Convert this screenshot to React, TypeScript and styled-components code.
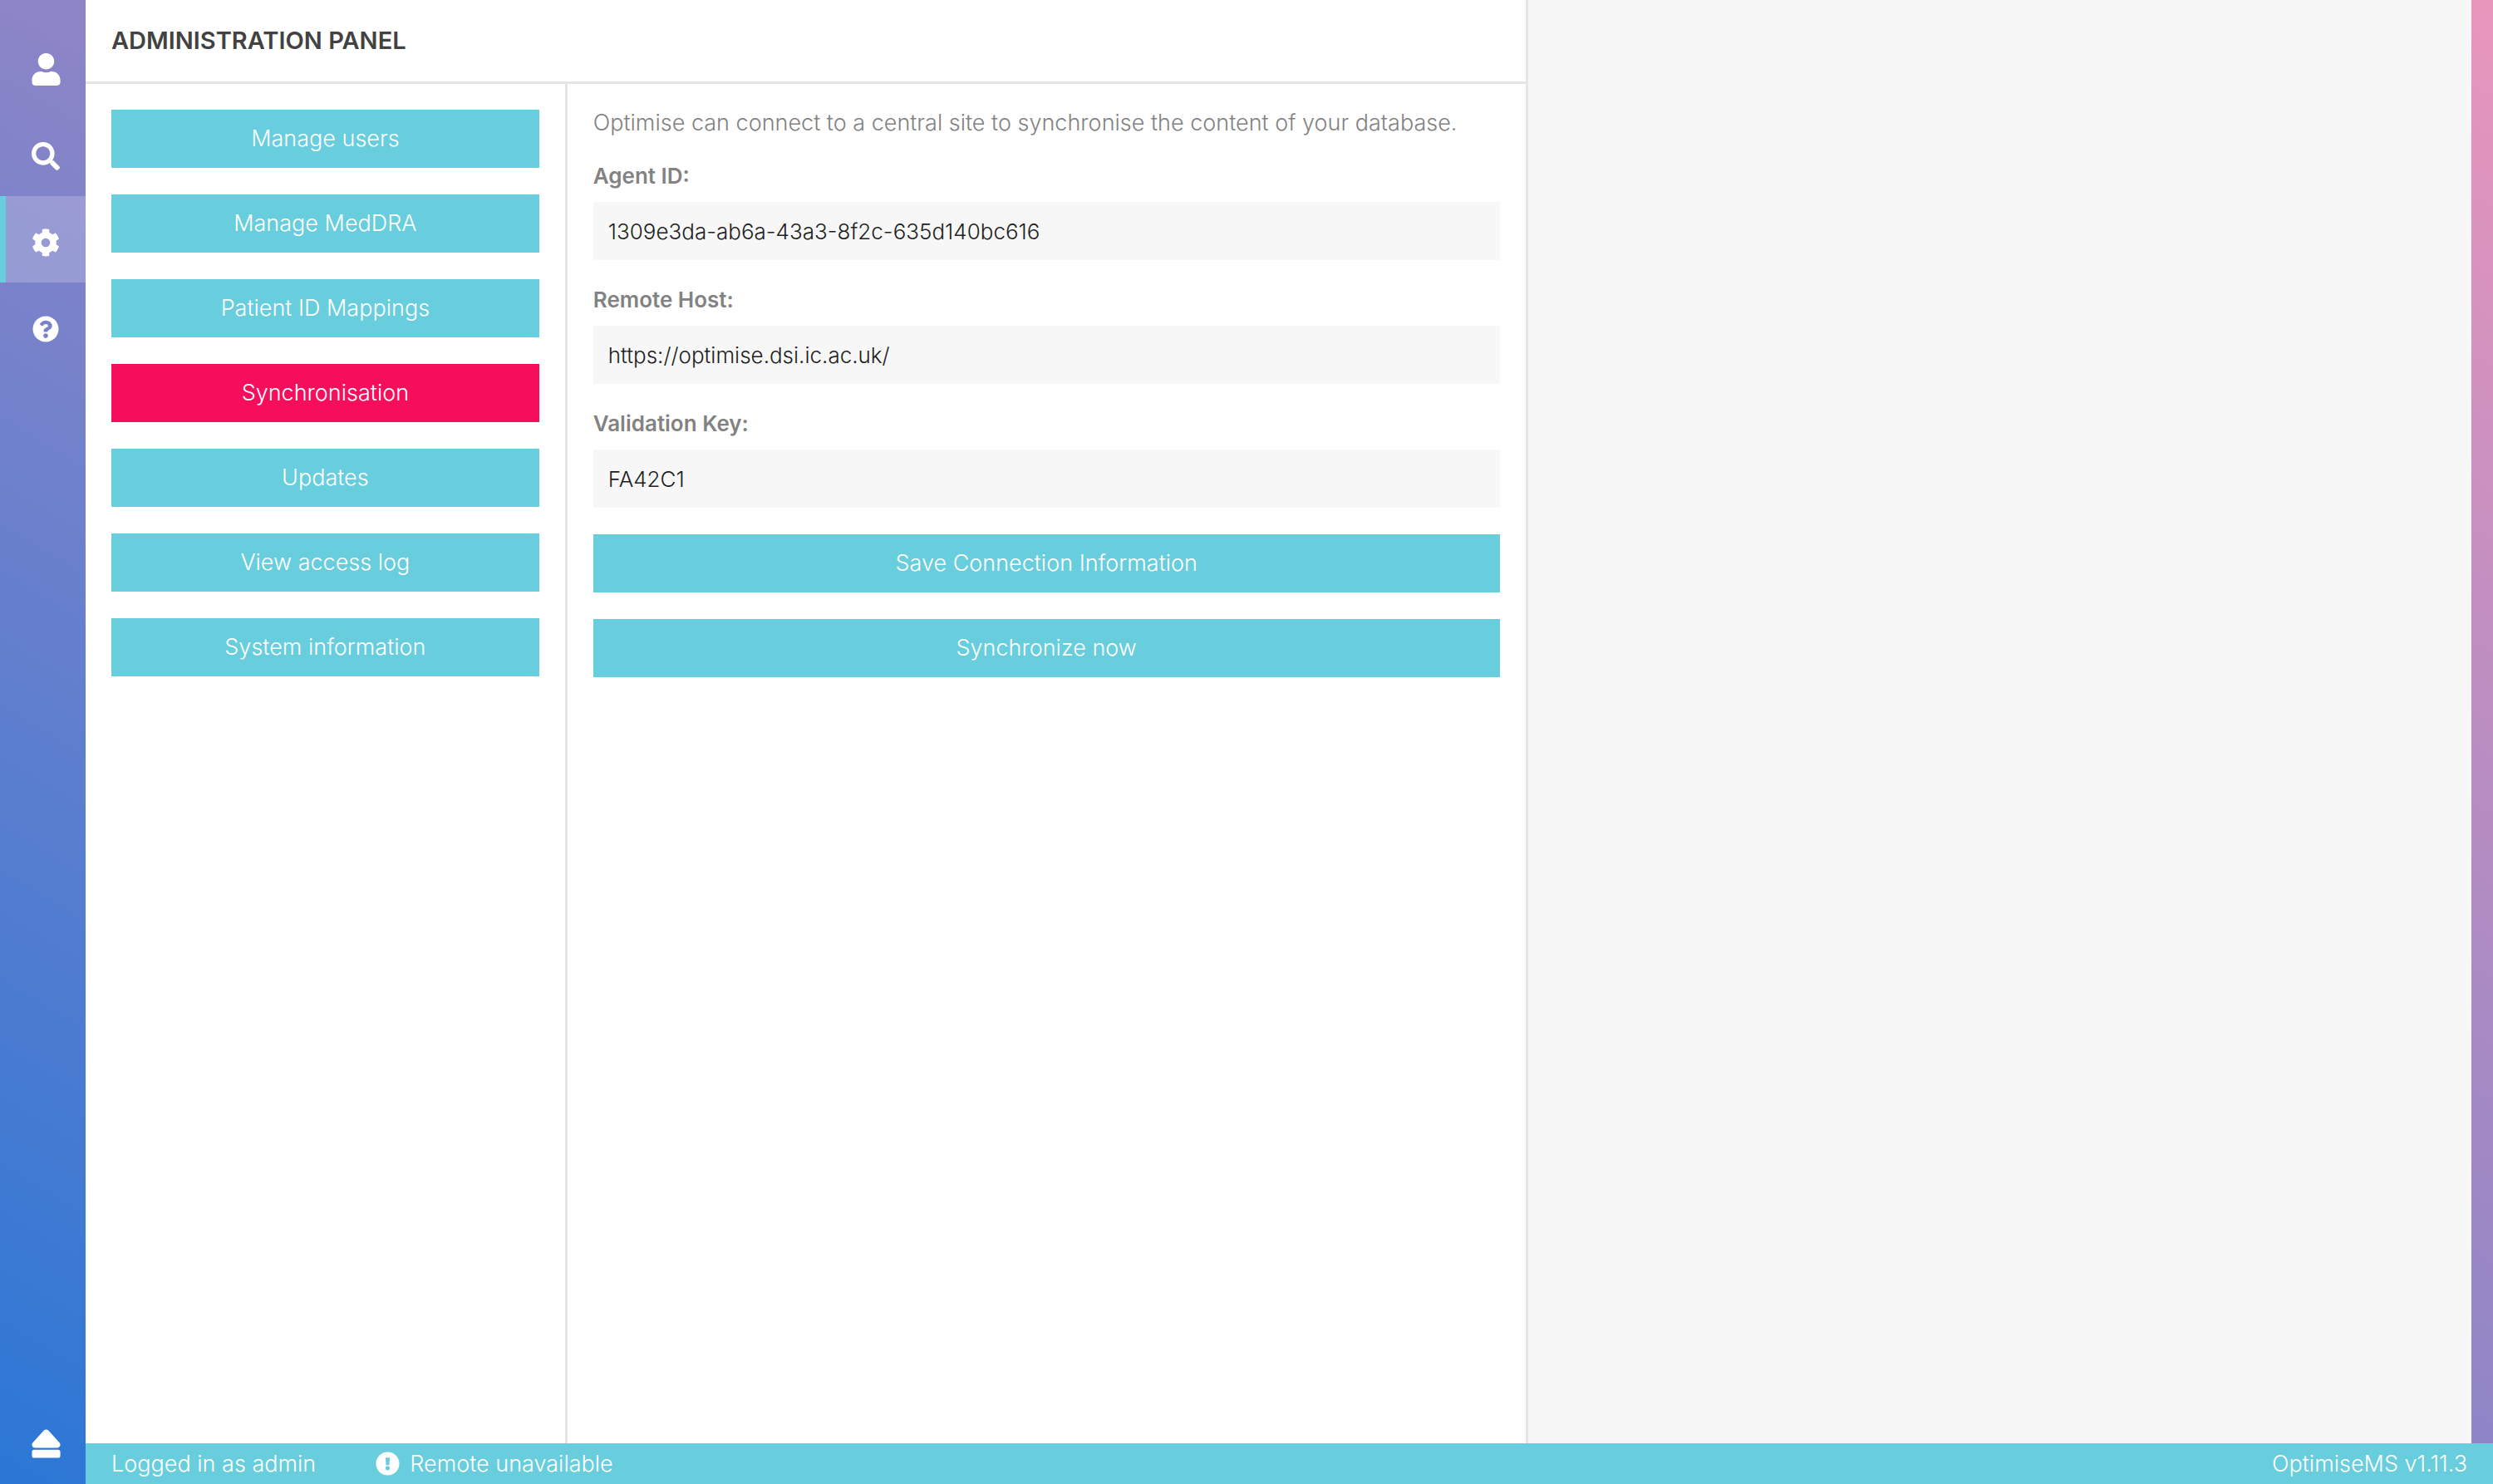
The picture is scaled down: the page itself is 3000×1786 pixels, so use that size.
import React from 'react';
import styled, { createGlobalStyle } from 'styled-components';
import { FaUser, FaSearch, FaCog, FaQuestionCircle, FaEject, FaExclamationCircle } from 'react-icons/fa';

const color = {
  accent: '#68cddc',
  active: '#f40e5b',
  line: '#e5e5e5',
  panel: '#f7f7f7',
};

const GlobalStyle = createGlobalStyle`
  * { box-sizing: border-box; }
  body { margin: 0; }
  body, button, input {
    font-family: 'Century Gothic', Inter, 'Liberation Sans', sans-serif;
    font-size: 27px;
    font-weight: 350;
    line-height: 32px;
  }
`;

const Shell = styled.div`
  min-height: 100vh;
  display: grid;
  grid-template-columns: 103px minmax(0, 1fr);
  grid-template-rows: minmax(0, 1fr) auto;
  background: linear-gradient(to top right, #2b77d6, #8c85c7, #e996bc);
`;

const Rail = styled.nav`
  grid-row: 1 / 3;
  display: flex;
  flex-direction: column;
  padding-top: 28px;
`;

const RailLink = styled.a<{ $active?: boolean; $last?: boolean }>`
  height: 104px;
  padding-top: 7px;
  display: flex;
  align-items: center;
  justify-content: center;
  color: #fff;
  border-left: 7px solid ${(p) => (p.$active ? color.accent : 'transparent')};
  background: ${(p) => (p.$active ? 'rgba(255, 255, 255, 0.2)' : 'none')};
  background-clip: padding-box;
  margin-top: ${(p) => (p.$last ? 'auto' : '0')};
`;

const Workspace = styled.div`
  display: flex;
  margin-right: 26px;
  background: ${color.panel};
`;

const Panel = styled.main`
  width: calc(60% + 13px);
  display: flex;
  flex-direction: column;
  background: #fff;
  border-right: 3px solid ${color.line};
`;

const Header = styled.header`
  padding: 31px;
  border-bottom: 3px solid ${color.line};
`;

const Title = styled.h1`
  margin: 0;
  font-size: 29px;
  line-height: 36px;
  font-weight: 600;
  color: #424242;
`;

const Columns = styled.div`
  flex: 1;
  display: grid;
  grid-template-columns: calc(33% + 8px) minmax(0, 1fr);
`;

const Menu = styled.div`
  display: flex;
  flex-direction: column;
  gap: 32px;
  padding: 31px;
  border-right: 3px solid ${color.line};
`;

const Button = styled.button<{ $active?: boolean }>`
  height: 70px;
  width: 100%;
  border: 0;
  padding: 0 18px;
  color: #fff;
  background: ${(p) => (p.$active ? color.active : color.accent)};
  cursor: pointer;
`;

const Form = styled.form`
  display: flex;
  flex-direction: column;
  gap: 32px;
  padding: 31px;
  color: #828282;
`;

const Intro = styled.p`
  margin: 0;
`;

const Field = styled.div`
  display: flex;
  flex-direction: column;
  gap: 15px;
`;

const Label = styled.label`
  font-size: 26px;
  font-weight: 600;
`;

const Input = styled.input`
  height: 70px;
  width: 100%;
  border: 0;
  padding: 0 18px;
  font-size: 26px;
  color: #1e1e1e;
  background: ${color.panel};
`;

const StatusBar = styled.footer`
  display: flex;
  align-items: center;
  gap: 72px;
  height: 49px;
  padding: 0 31px;
  color: #fff;
  background: ${color.accent};
`;

const Status = styled.span`
  display: flex;
  align-items: center;
  gap: 12px;
`;

const Version = styled.span`
  margin-left: auto;
`;

const rail = [
  { label: 'Patients', Icon: FaUser, size: 39 },
  { label: 'Search', Icon: FaSearch, size: 34 },
  { label: 'Administration', Icon: FaCog, size: 34, active: true },
  { label: 'Help', Icon: FaQuestionCircle, size: 32 },
];

const menu = [
  'Manage users',
  'Manage MedDRA',
  'Patient ID Mappings',
  'Synchronisation',
  'Updates',
  'View access log',
  'System information',
];

const fields = [
  { id: 'agent', label: 'Agent ID:', value: '1309e3da-ab6a-43a3-8f2c-635d140bc616' },
  { id: 'host', label: 'Remote Host:', value: 'https://optimise.dsi.ic.ac.uk/' },
  { id: 'key', label: 'Validation Key:', value: 'FA42C1' },
];

export default function App() {
  return (
    <>
      <GlobalStyle />
      <Shell>
        <Rail>
          {rail.map(({ label, Icon, size, active }) => (
            <RailLink key={label} href="#" aria-label={label} $active={active}>
              <Icon size={size} />
            </RailLink>
          ))}
          <RailLink href="#" aria-label="Log out" $last>
            <FaEject size={39} />
          </RailLink>
        </Rail>
        <Workspace>
          <Panel>
            <Header>
              <Title>ADMINISTRATION PANEL</Title>
            </Header>
            <Columns>
              <Menu>
                {menu.map((item) => (
                  <Button key={item} type="button" $active={item === 'Synchronisation'}>
                    {item}
                  </Button>
                ))}
              </Menu>
              <Form>
                <Intro>Optimise can connect to a central site to synchronise the content of your database.</Intro>
                {fields.map(({ id, label, value }) => (
                  <Field key={id}>
                    <Label htmlFor={id}>{label}</Label>
                    <Input id={id} type="text" defaultValue={value} />
                  </Field>
                ))}
                <Button type="button">Save Connection Information</Button>
                <Button type="button">Synchronize now</Button>
              </Form>
            </Columns>
          </Panel>
        </Workspace>
        <StatusBar>
          <span>Logged in as admin</span>
          <Status>
            <FaExclamationCircle size={29} />
            Remote unavailable
          </Status>
          <Version>OptimiseMS v1.11.3</Version>
        </StatusBar>
      </Shell>
    </>
  );
}
